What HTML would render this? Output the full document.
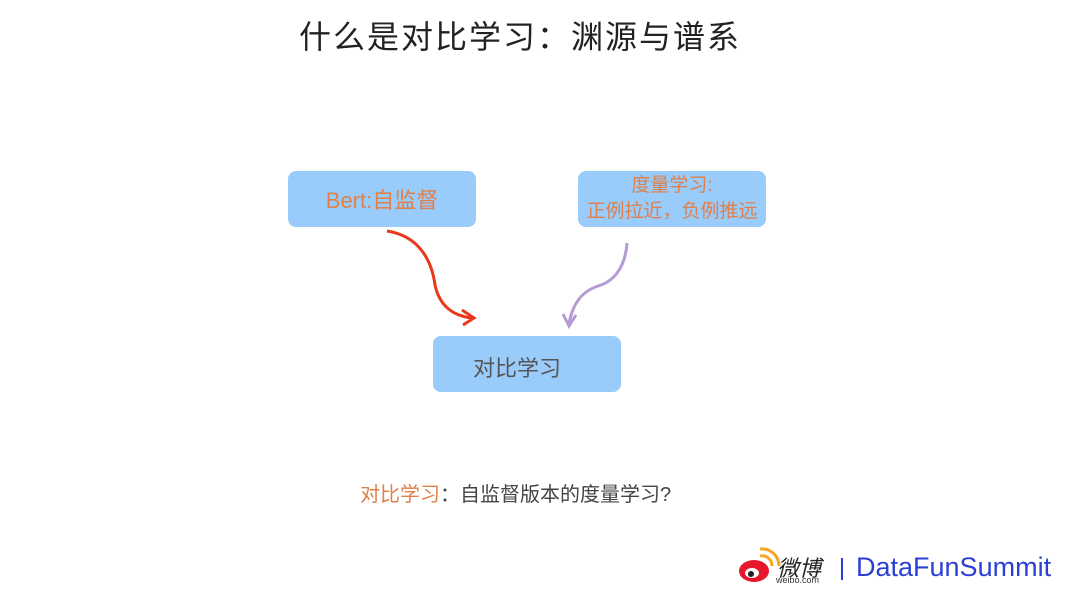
<!DOCTYPE html>
<html><head><meta charset="utf-8"><style>
body{margin:0;width:1080px;height:602px;background:#fff;position:relative;overflow:hidden;font-family:"Liberation Sans","Noto Sans CJK SC",sans-serif}
.t{position:absolute;white-space:nowrap}
.box{position:absolute;background:#99cbfb;border-radius:8px;display:flex;align-items:center;justify-content:center;text-align:center}
</style></head><body>
<div class="t" style="left:299px;top:12px;font-size:32px;color:#222;letter-spacing:2px">什么是对比学习：渊源与谱系</div>
<div class="box" style="left:288px;top:171px;width:188px;height:56px;color:#e0804a;font-size:22px">Bert:自监督</div>
<div class="box" style="left:578px;top:171px;width:188px;height:56px;color:#e0804a;font-size:19px;line-height:26px">度量学习:<br>正例拉近，负例推远</div>
<div class="box" style="left:433px;top:336px;width:168px;height:56px;padding-right:20px;color:#555;font-size:22px;padding-top:5px;box-sizing:border-box;width:188px">对比学习</div>
<svg style="position:absolute;left:0;top:0" width="1080" height="602">
<path d="M387 231 C420 236 432 262 435 285 C440 308 455 316 472 318" stroke="#e8391c" stroke-width="3" fill="none"/>
<path d="M462 310 L474 318 L463 325" stroke="#e8391c" stroke-width="3" fill="none"/>
<path d="M627 243 C625 270 612 282 598 286 C580 292 572 306 569 324" stroke="#b59bd6" stroke-width="3" fill="none"/>
<path d="M563 314 L569 326 L576 315" stroke="#b59bd6" stroke-width="3" fill="none"/>
<ellipse cx="754" cy="571" rx="15" ry="11" fill="#e6162d"/>
<ellipse cx="752" cy="573" rx="7" ry="5" fill="#fff"/>
<circle cx="751" cy="574" r="3" fill="#222"/>
<path d="M760 556 A10 10 0 0 1 772 566" stroke="#f5a623" stroke-width="3" fill="none"/>
<path d="M760 549 A17 17 0 0 1 779 566" stroke="#f5a623" stroke-width="3" fill="none"/>
<line x1="842" y1="558" x2="842" y2="580" stroke="#2b3fd6" stroke-width="2"/>
</svg>
<div class="t" style="left:360px;top:478px;font-size:20px;color:#444"><span style="color:#e0804a">对比学习</span>：自监督版本的度量学习?</div>
<div class="t" style="left:777px;top:551px;font-size:22px;color:#222;font-style:italic">微博</div>
<div class="t" style="left:776px;top:575px;font-size:9px;color:#333">weibo.com</div>
<div class="t" style="left:856px;top:552px;font-size:27px;color:#2b3fd6">DataFunSummit</div>
</body></html>
